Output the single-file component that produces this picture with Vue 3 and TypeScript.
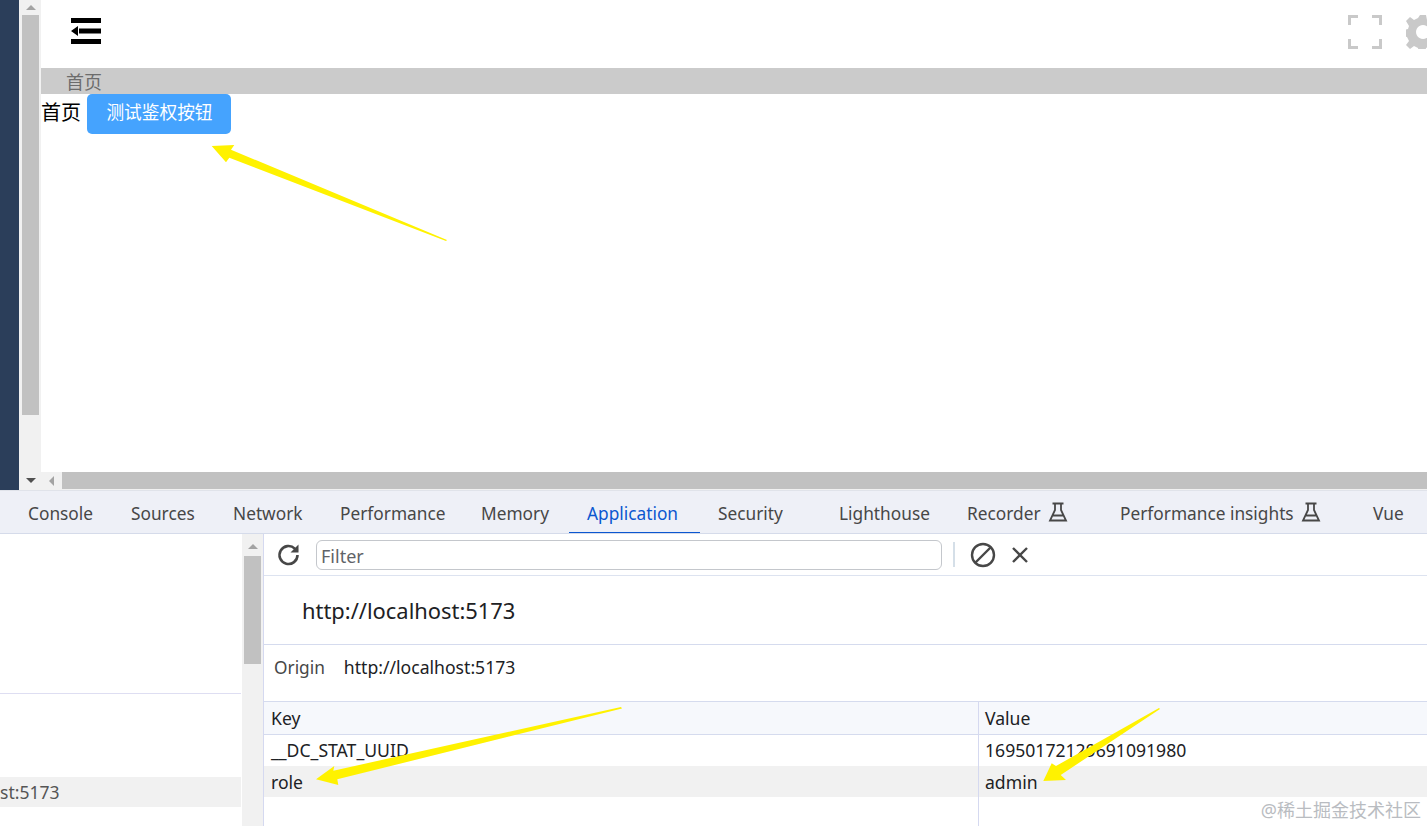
<script setup lang="ts">
const tabs = [
  { label: 'Console', w: 103 },
  { label: 'Sources', w: 102 },
  { label: 'Network', w: 107 },
  { label: 'Performance', w: 141 },
  { label: 'Memory', w: 106 },
  { label: 'Application', w: 131, active: true },
  { label: 'Security', w: 121 },
  { label: 'Lighthouse', w: 128 },
  { label: 'Recorder', w: 153, flask: true },
  { label: 'Performance insights', w: 253, flask: true },
  { label: 'Vue', w: 70 },
]
const rows = [
  { key: '__DC_STAT_UUID', value: '16950172129691091980', selected: false },
  { key: 'role', value: 'admin', selected: true },
]
</script>

<template>
  <div class="screen">
    <section class="page">
      <aside class="sidebar"></aside>
      <div class="vbar">
        <div class="vbar-up"><i class="tri up"></i></div>
        <div class="vbar-thumb"></div>
        <div class="vbar-down"><i class="tri down"></i></div>
      </div>
      <div class="main">
        <header class="head">
          <svg class="menu" width="30" height="26" viewBox="0 0 30 26">
            <path d="M0 0h30v5H0zM0 21h30v5H0zM8 10.500h22v5H8zM0 13l7-5v10z" fill="#000" />
          </svg>
          <div class="head-right">
            <svg width="34" height="34" viewBox="0 0 34 34" fill="none" stroke="#c9c9c9" stroke-width="3">
              <path d="M10 1.500H1.500V10M24 1.500h8.500V10M1.500 24v8.500H10M32.500 24v8.500H24" />
            </svg>
            <svg class="gear" width="34" height="34" viewBox="0 0 34 34">
              <path fill="#c9c9c9" fill-rule="evenodd" d="M14 0h6l1 5 4 2 4-3 4 4-3 5 1 2 3 1v6l-4 1-1 3 3 4-4 4-4-3-4 2-1 5h-6l-1-5-4-2-4 3-4-4 3-4-2-4-4-1v-6l5-1 1-3-3-5 4-4 4 3 4-2zM17 10a7 7 0 1 0 .01 0z" />
            </svg>
          </div>
        </header>
        <div class="crumb">首页</div>
        <div class="content">
          <span class="title">首页</span>
          <button class="auth-btn" type="button">测试鉴权按钮</button>
        </div>
        <div class="hbar">
          <div class="hbar-left"><i class="tri left"></i></div>
          <div class="hbar-thumb"></div>
        </div>
      </div>
    </section>

    <section class="devtools">
      <nav class="tabs">
        <span
          v-for="t in tabs"
          :key="t.label"
          class="tab"
          :class="{ active: t.active }"
          :style="{ width: t.w + 'px' }"
        >
          {{ t.label }}
          <svg v-if="t.flask" class="flask" width="20" height="20" viewBox="0 0 20 20" fill="none" stroke="#474747" stroke-width="1.800">
            <path d="M4.500 1.500h11M7 1.500v6.500L2 18.500h16L13 8V1.500M5 13.500h10" />
          </svg>
        </span>
      </nav>
      <div class="panes">
        <aside class="tree">
          <div class="tree-top"></div>
          <div class="tree-row">st:5173</div>
          <div class="tree-scroll">
            <i class="tri up small"></i>
            <div class="tree-thumb"></div>
          </div>
        </aside>
        <div class="detail">
          <div class="toolbar">
            <svg width="26" height="26" viewBox="0 0 26 26" fill="none" stroke="#474747" stroke-width="2.600">
              <path d="M21.500 13a9 9 0 1 1-2.700-6.400L21.500 9" />
              <path d="M22.500 2.500v8h-8" fill="#474747" stroke="none" />
            </svg>
            <input class="filter" placeholder="Filter" />
            <span class="divider"></span>
            <svg width="26" height="26" viewBox="0 0 26 26" fill="none" stroke="#474747" stroke-width="2.400">
              <circle cx="13" cy="13" r="11" />
              <path d="M5.500 20.500l15-15" />
            </svg>
            <svg width="18" height="18" viewBox="0 0 18 18" fill="none" stroke="#474747" stroke-width="2.400">
              <path d="M2 2l14 14M16 2L2 16" />
            </svg>
          </div>
          <h2 class="origin-title">http://localhost:5173</h2>
          <div class="origin-line"><span>Origin</span><b>http://localhost:5173</b></div>
          <div class="grid">
            <div class="cell head-cell">Key</div>
            <div class="cell head-cell val">Value</div>
            <template v-for="r in rows" :key="r.key">
              <div class="cell" :class="{ sel: r.selected }">{{ r.key }}</div>
              <div class="cell val" :class="{ sel: r.selected }">{{ r.value }}</div>
            </template>
            <div class="cell fill"></div>
            <div class="cell fill val"></div>
          </div>
        </div>
      </div>
    </section>

    <svg class="arrows" width="1427" height="826" viewBox="0 0 1427 826">
      <g fill="#fff200">
        <path d="M211.700 146L234.300 145 231 149.700 447 240 446 241 229.300 157.700 226 162.300z" />
        <path d="M316 779.300L334.300 766 333.300 770.700 621 707 622 708.500 337.300 779.300 338.300 785z" />
        <path d="M1043.300 781L1051.700 763.300 1056 766 1159 708 1160 709 1060.700 775 1066 780z" />
      </g>
    </svg>
    <span class="mark">@稀土掘金技术社区</span>
  </div>
</template>

<style>
html, body { margin: 0; overflow: hidden; background: #fff; }
</style>

<style scoped>
.screen {
  position: relative;
  width: 1427px;
  height: 826px;
  overflow: hidden;
  font-family: "Noto Sans", "Noto Sans CJK SC", sans-serif;
  background: #fff;
}
.page { display: flex; height: 490px; }
.sidebar { width: 19px; background: #2b3e5a; }
.vbar { width: 22px; padding-left: 1px; box-sizing: border-box; background: #f1f1f1; display: flex; flex-direction: column; align-items: center; }
.vbar-up { height: 15px; display: flex; align-items: center; justify-content: center; }
.vbar-thumb { width: 17px; height: 400px; background: #c1c1c1; }
.vbar-down { margin-top: auto; height: 20px; display: flex; align-items: center; justify-content: center; }
.tri { display: block; width: 0; height: 0; border-style: solid; border-color: transparent; }
.tri.up { border-width: 0 5px 5px; border-bottom-color: #a3a3a3; }
.tri.down { border-width: 5px 5px 0; border-top-color: #505050; }
.tri.left { border-width: 5px 5px 5px 0; border-right-color: #a3a3a3; }
.main { flex: 1; display: flex; flex-direction: column; min-width: 0; }
.head { height: 68px; display: flex; align-items: center; justify-content: space-between; padding-left: 30px; box-sizing: border-box; }
.menu { margin-top: -6px; }
.head-right { display: flex; gap: 24px; margin-right: -13px; margin-top: -5px; }
.gear { flex: none; }
.crumb { height: 26px; line-height: 28px; padding-left: 25px; background: #cbcbcb; color: #6c6c6c; font-size: 18px; }
.content { flex: 1; display: flex; align-items: flex-start; gap: 6px; }
.title { font-size: 20px; line-height: 38px; color: #000; }
.auth-btn {
  width: 144px;
  height: 40px;
  border: 0;
  border-radius: 5px;
  background: #45a3fe;
  color: #fff;
  font: 17.700px "Noto Sans CJK SC", sans-serif;
  padding: 0 0 7px 1px;
}
.hbar { height: 18px; background: #f1f1f1; display: flex; }
.hbar-left { width: 21px; display: flex; align-items: center; justify-content: center; }
.hbar-thumb { flex: 1; background: #c1c1c1; margin-bottom: 1px; }
.devtools { height: 336px; display: flex; flex-direction: column; color: #474747; }
.tabs {
  height: 44px;
  flex: none;
  box-sizing: border-box;
  background: #eef0f7;
  border-top: 1px solid #e0e3ea;
  border-bottom: 1px solid #d5dbea;
  display: flex;
  padding-left: 9.500px;
}
.tab { flex: none; box-sizing: border-box; padding: 3px 0 0 18.500px; font-size: 17.300px; white-space: nowrap; display: flex; align-items: center; gap: 7px; }
.tab.active { color: #0b57d0; box-shadow: inset 0 -1px 0 #0b57d0; }
.flask { flex: none; margin-top: -4px; }
.panes { flex: 1; display: flex; min-height: 0; }
.tree { position: relative; width: 264px; flex: none; box-sizing: border-box; border-right: 1px solid #d5d9f0; background: #fff; }
.tree-top { height: 159px; margin-right: 22px; border-bottom: 1px solid #dedef2; }
.tree-row { margin-top: 83px; height: 30px; line-height: 30px; margin-right: 22px; background: #f1f1f1; font-size: 17.500px; color: #555; }
.tree-scroll { position: absolute; right: 0; top: 0; bottom: 0; width: 21px; background: #f1f1f1; display: flex; flex-direction: column; align-items: center; padding-top: 10px; box-sizing: border-box; }
.tree-thumb { width: 17px; height: 108px; margin-top: 7px; background: #c1c1c1; }
.detail { flex: 1; min-width: 0; display: flex; flex-direction: column; }
.toolbar { height: 42px; flex: none; box-sizing: border-box; border-bottom: 1px solid #dde3f0; display: flex; align-items: center; padding-left: 12px; }
.filter {
  width: 626px;
  height: 30px;
  box-sizing: border-box;
  margin-left: 14px;
  border: 1px solid #c4c7cc;
  border-radius: 6px;
  padding: 2px 4px 0;
  font: 18px "Noto Sans", sans-serif;
  background: #fff;
}
.filter::placeholder { color: #5f6368; opacity: 1; }
.divider { width: 2px; height: 25px; margin: 0 15px 0 11px; background: #d5dfe8; }
.toolbar svg:last-child { margin-left: 15px; }
.origin-title { margin: 0; height: 69px; flex: none; box-sizing: border-box; padding: 20px 0 0 38px; font-size: 21.900px; line-height: 30px; font-weight: 400; color: #202124; border-bottom: 1px solid #d5dbee; }
.origin-line { height: 57px; flex: none; display: flex; align-items: flex-start; padding: 10px 0 0 10px; font-size: 17.300px; line-height: 25px; gap: 19px; border-bottom: 1px solid #d5dbee; box-sizing: border-box; }
.origin-line b { font-weight: 400; color: #202124; font-size: 17.600px; }
.grid { flex: 1; display: grid; grid-template-columns: 715px 1fr; grid-template-rows: 33px 31px 31px 1fr; }
.cell { padding-left: 7px; font-size: 17.600px; line-height: 31px; color: #202124; white-space: nowrap; }
.cell.val { padding-left: 6px; }
.cell:nth-child(odd) { border-right: 1px solid #d5d9f0; }
.head-cell { background: #f6f8fc; border-bottom: 1px solid #d5dbee; line-height: 33px; }
.sel { background: #f1f1f1; line-height: 32px; }
.arrows { position: absolute; inset: 0; pointer-events: none; }
.mark { position: absolute; right: 6px; bottom: 4px; font-size: 18px; color: #b9bcc1; }
</style>
